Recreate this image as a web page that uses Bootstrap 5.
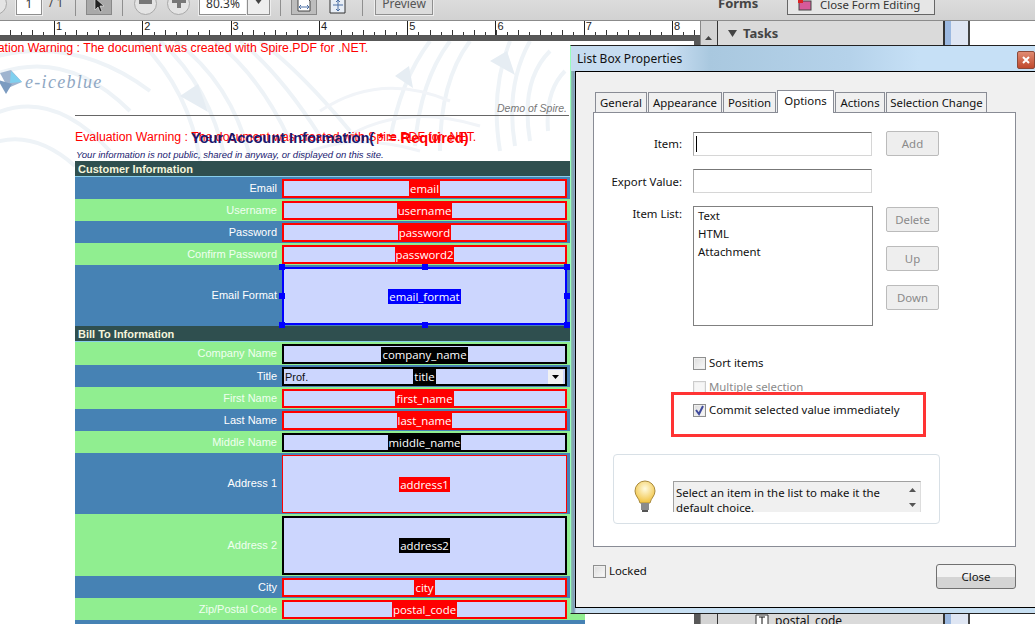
<!DOCTYPE html>
<html lang="en">
<head>
<meta charset="utf-8">
<title>List Box Properties</title>
<link href="https://cdn.jsdelivr.net/npm/bootstrap@5.3.0/dist/css/bootstrap.min.css" rel="stylesheet">
<style>
html,body{margin:0;height:624px;overflow:hidden;background:#fff}
body{position:relative;width:1035px;font-family:"Liberation Sans",Arial,sans-serif;color:#000}
.ui{font-family:"Noto Sans","Open Sans",sans-serif;font-size:11.4px}
.tbar{height:21px;background:linear-gradient(#dcdcdc,#d2d2d2);border-bottom:1px solid #8b8b8b;overflow:hidden;position:relative}
.tbar-in{height:20px;margin-top:-5px;align-items:flex-start}
.tsep{width:1px;height:16px;background:#8f8f8f;margin-top:5px;flex:none}
.tbox{height:20px;background:#fff;border:1px solid #8f8f8f;box-shadow:0 0 0 1px #eee;font-size:12px;color:#333;text-align:center;line-height:16px;flex:none}
.tround{width:23px;height:23px;border-radius:50%;background:#e4e4e4;border:1px solid #a8a8a8;margin-top:-3px;flex:none;display:flex;align-items:center;justify-content:center}
.tbtn{height:20px;border:1px solid #888;background:#c8c8c8;flex:none;display:flex;align-items:center;justify-content:center}
.toolmain{height:603px}
.docside{width:700px;flex:none;position:relative;overflow:hidden;background:#585858}
.rul{height:15px;background-color:#fff;position:relative;border-bottom:1px solid #555;
 background-image:repeating-linear-gradient(90deg,#333 0 1px,transparent 1px 22.08px),repeating-linear-gradient(90deg,#333 0 1px,transparent 1px 11.04px);
 background-size:100% 5px,100% 3px;background-position:10px bottom,10px bottom;background-repeat:no-repeat;overflow:hidden}
.rul-in{padding-left:54px;height:15px}
.rcell{width:88.3px;flex:none;border-left:1px solid #222;font-size:11px;line-height:11px;padding-left:1px;color:#222}
.darkstrip{height:5px;background:#585858}
.pagewrap{position:relative;height:583px;width:694px;background:#fff;overflow:hidden}
.palm{position:absolute;left:0;top:0;width:694px;height:130px}
.pg{position:relative}
.warn{color:#f00;font-size:12.3px;line-height:15px;white-space:nowrap}
.warn1{margin-left:-33px;line-height:14px}
.logo-row{margin-top:12px;height:30px;align-items:center;padding-left:0}
.logo-txt{font-family:"Liberation Serif",serif;font-style:italic;font-size:18px;letter-spacing:1.3px;color:#8fa7c3;margin-left:3px}
.demo{width:494px;margin-left:75px;text-align:right;color:#777;font-style:italic;font-size:10.5px;line-height:13px;border-bottom:1px solid #666;height:19px;padding-top:5px;padding-right:2px}
.warnline{margin-left:75px;margin-top:14px;position:relative;width:494px;height:15px}
.acct{position:absolute;left:116px;top:0;font-weight:700;font-size:14.6px;line-height:16px;color:#191970;white-space:nowrap}
.acct b{color:#f00}
.info{margin-left:76px;margin-top:4px;color:#191970;font-style:italic;font-size:9.5px;line-height:12px;white-space:nowrap}
.ftable{margin-left:75px;width:510px}
.fhead{background:#2f4f4f;color:#f5f5dc;font-weight:700;font-size:11px;height:16px;line-height:15px;padding:1px 0 0 3px;border-bottom:1px solid #87ceeb}
.frow{display:flex;align-items:stretch}
.h22{height:22px}.h23{height:23px}.h61{height:61px}.h62{height:62px}
.bl{background:#4682b4}.gr{background:#90ee90}
.lbl{width:207px;flex:none;text-align:right;padding-right:5px;font-size:11px;color:#fff;align-self:center}
.gr .lbl{color:#f0fff0}
.fld{width:285px;flex:none;margin:2px 0 1px;background:#ccd6fe;border:2px solid #f00;display:flex;align-items:center;justify-content:center;position:relative}
.fld.thin{border-width:1px}
.fld.blk{border-color:#000}
.fld.sel{border-color:#00f}
.nm{font-family:"Open Sans","Noto Sans",sans-serif;font-size:11.4px;line-height:15px;color:#fff;background:#f00;padding:0 1px;white-space:nowrap}
.blk .nm{background:#000}.sel .nm{background:#00f}
.hd{position:absolute;width:6px;height:6px;background:#00f}
.prof{position:absolute;left:1px;top:1px;font-family:"Liberation Sans",sans-serif;font-size:11px;color:#111;line-height:15px}
.ddn{position:absolute;right:2px;top:1px;width:15px;height:14px;background:#f2f2f2;display:flex;align-items:center;justify-content:center}
.vscroll{width:17px;flex:none;background:#d4d4d4;border-left:1px solid #888;position:relative}
.sidep{width:228px;flex:none;background:#dadada;border-right:2px solid #333;border-left:1px solid #333;position:relative}
.sidep-top{height:25px;padding:4px 0 0 10px;font-weight:700;color:#444;font-size:13px;line-height:16px}
.tree{position:absolute;left:37px;top:591px;display:flex;align-items:center;gap:6px;font-size:12px;color:#111}
.sidestrip{width:25px;flex:none;background:linear-gradient(90deg,#9bb8e0 0 6px,#dfe6f3 6px);border-right:2px solid #444}
.fright{flex:1;background:#fff}
.fright i{display:block;height:27px;border-bottom:1px solid #ccc}
.tform{position:absolute;left:718px;top:-5px;font-weight:700;font-size:13px;color:#444;line-height:16px}
.tclose{position:absolute;left:787px;top:-6px;width:148px;height:21px;background:#e6e6e6;border:1px solid #666;font-size:11.4px;color:#333;display:flex;align-items:center;gap:7px;padding-left:9px;line-height:14px}
.dlg{position:absolute;left:570px;top:45px;width:465px;height:569px;background:linear-gradient(90deg,#8dc2ad,#7d98b8 3px,#c7dff2 5px);border-top:1px solid #222;border-bottom:1px solid #222;border-left:1px solid #9fb;overflow:hidden}
.dlg-title{height:25px;padding-left:6px;line-height:25px;background:linear-gradient(90deg,#c6dcf0 22%,#a9c8df 30%,#b5d2ea 60%,#c6e0f6 75%);color:#111;font-size:12px;position:relative}
.dclose{position:absolute;right:0;top:5px;width:18px;height:18px;background:linear-gradient(#e08b72,#c0492d);border:1px solid #8b4a3a;color:#fff;display:flex;align-items:center;justify-content:center;border-radius:2px}
.dbody{margin-left:4px;width:461px;height:537px;background:#f0f0f0;border:1px solid #000;border-right:0;padding:18px 0 0 17px;position:relative}
.tabsr{height:22px;align-items:flex-end;padding-left:2px;position:relative;z-index:1;gap:1px}
.tabb{height:20px;background:#f0f0f0;border:1px solid #898c95;border-bottom:0;line-height:19px;text-align:center;color:#111;flex:none;white-space:nowrap}
.tabb.on{background:#fff;margin-bottom:-1px;height:23px;line-height:20px}
.tpanel{width:423px;height:435px;background:#fff;border:1px solid #898c95;padding-top:18px;box-sizing:border-box}
.prow{display:flex;align-items:center}
.plbl{width:88px;flex:none;text-align:right;color:#111;margin-right:11px;padding-top:1px}
.plbl.lst{padding-top:0;margin-top:-1px}
.ptxt{width:179px;height:24px;flex:none;border:1px solid #d6d6d6;border-top-color:#777;border-left-color:#aaa;background:#fff;position:relative}
.caret-b{position:absolute;left:2px;top:3px;width:1px;height:16px;background:#000}
.pbtn{width:53px;height:25px;flex:none;border:1px solid #bbb;background:#eee;border-radius:2px;color:#8a8a8a;text-align:center;line-height:23px;padding:0}
.plist{width:180px;height:120px;border:1px solid #808080;padding:0 4px;line-height:18px;color:#111;flex:none}
.ck{width:13px;height:13px;border:1px solid #8e8f8f;background:linear-gradient(135deg,#dcdcdc,#fafafa);box-shadow:inset 0 0 0 1px #eee;flex:none;display:flex;align-items:center;justify-content:center;margin-right:3px}
.ckr{display:flex;align-items:center;color:#111;height:18px;margin-left:99px}
.ckr.dis{color:#8a8a8a}
.ckr.dis .ck{border-color:#ccc;background:#f6f6f6}
.redann{position:absolute;left:95px;top:320px;width:255px;height:45px;border:3px solid #f33}
.tipbox{margin-left:19px;width:327px;height:70px;border:1px solid #d8e0e6;border-radius:4px;position:relative;display:flex;align-items:flex-end;padding:0 18px 11px 20px;gap:17px}
.tiptxt{width:248px;height:31px;background:#f0f0f0;border:1px solid #a0a0a0;border-bottom:0;border-right-color:#ddd;line-height:15px;padding:3px 20px 0 2px;overflow:hidden;position:relative;color:#111}
.tipsc{position:absolute;right:0;top:0;bottom:0;width:16px;background:#f0f0f0;display:flex;flex-direction:column;align-items:center;justify-content:space-around}
.dfoot{width:423px;margin-top:15px;height:27px;align-items:flex-start;justify-content:space-between}
.cbtn{width:80px;height:25px;margin-top:2px;border:1px solid #707070;border-radius:3px;background:linear-gradient(#f2f2f2 50%,#d4d4d4 50%);text-align:center;color:#111;line-height:23px;padding:0}
</style>
</head>
<body>
<div class="tbar ui">
  <div class="d-flex tbar-in">
    <div class="tround" style="margin-left:-16px;margin-right:9px"></div>
    <div class="tbox" style="width:26px;margin-right:7px">1</div>
    <div style="width:20px;flex:none;margin-right:6px;color:#444;line-height:16px;font-size:12px">/ 1</div>
    <div class="tsep" style="margin-right:10px"></div>
    <div class="tbtn" style="width:26px;margin-right:10px;background:#a9a9a9"><svg width="12" height="16" viewBox="0 0 12 16"><path d="M2 1v12l3-3 2 5 2-1-2-5h4z" fill="#222" stroke="#eee" stroke-width=".6"/></svg></div>
    <div class="tsep" style="margin-right:11px"></div>
    <div class="tround" style="margin-right:10px"><span style="display:block;width:13px;height:5px;background:#777;margin-top:-5px"></span></div>
    <div class="tround" style="margin-right:9px"><svg width="14" height="14" style="margin-top:-5px"><path d="M5 0h4v5h5v4H9v5H5V9H0V5h5z" fill="#777"/></svg></div>
    <div class="tbox" style="width:48px">80.3%</div>
    <div class="tbox" style="width:23px;background:#eee;margin-right:10px"><svg width="9" height="6" style="vertical-align:4px"><path d="M0 0h9L4.500 6z" fill="#444"/></svg></div>
    <div class="tsep" style="margin-right:10px"></div>
    <div class="tbtn" style="width:26px;margin-right:12px;background:#bdbdbd"><svg width="18" height="16"><path d="M3 1h9l3 3v10H3z" fill="#fff" stroke="#444"/><path d="M4 10h10M4 10l2-2M4 10l2 2M14 10l-2-2M14 10l-2 2" stroke="#4a6fa5"/></svg></div>
    <div style="width:18px;flex:none;margin-right:15px;margin-top:1px"><svg width="18" height="18"><path d="M1 1h15v15H1z" fill="#e8eef6" stroke="#333"/><path d="M9 3v11M4 8h10M9 3L7 5M9 3l2 2M9 14l-2-2M9 14l2-2" stroke="#4a6fa5"/></svg></div>
    <div class="tsep" style="margin-right:12px"></div>
    <div class="tbox" style="width:58px;background:#dcdcdc;color:#555">Preview</div>
  </div>
  <div class="tform">Forms</div>
  <div class="tclose"><svg width="16" height="14"><rect x="2" y="3" width="12" height="9" fill="#d65a9a" stroke="#444"/><rect x="1" y="0" width="5" height="5" fill="#d22"/></svg><span>Close Form Editing</span></div>
</div>
<div class="d-flex toolmain">
  <div class="docside">
    <div class="rul"><div class="d-flex rul-in"><div class="rcell">1</div><div class="rcell">2</div><div class="rcell">3</div><div class="rcell">4</div><div class="rcell">5</div><div class="rcell">6</div><div class="rcell">7</div><div class="rcell">8</div></div></div>
    <div class="darkstrip"></div>
    <div class="pagewrap">
      <svg class="palm" viewBox="0 0 694 130" fill="none" stroke="#eef3f7" stroke-width="4">
        <path d="M-20 40Q60 0 130 70M-10 75Q50 45 110 110M-15 105Q30 85 75 125M-20 20Q70 -10 150 50M140 0Q190 50 200 120M160 0Q210 45 225 118M175 0Q230 40 250 115M215 0Q260 35 290 100M240 0Q280 32 320 95M260 0Q300 30 350 90M430 0Q400 40 390 100M450 0Q420 40 415 105M470 0Q440 40 440 110M510 0Q490 50 500 110M530 0Q505 45 515 105M550 10Q520 40 530 100M565 30Q545 50 548 90"/>
        <path d="M320 70Q380 30 450 60M340 100Q400 60 480 85M300 115Q350 90 420 110" stroke="#f1f4f8" stroke-width="3"/>
        <path d="M490 20l25 14 -8 -24zM180 55l28 16 -10 -28zM395 35l18 12 -4 -22z" fill="#e6edf3" stroke="none"/>
      </svg>
      <div class="pg">
        <div class="warn warn1">Evaluation Warning : The document was created with Spire.PDF for .NET.</div>
        <div class="d-flex logo-row">
          <svg width="22" height="28" viewBox="0 0 22 28" class="flex-none"><path d="M0 5l11-3 11 12-14 6z" fill="#9fb4cf"/><path d="M11 3l11 11-12 1z" fill="#7fd0ef"/><path d="M-2 12l8 14 6-10z" fill="#7c9bc0"/></svg>
          <span class="logo-txt">e-iceblue</span>
        </div>
        <div class="demo">Demo of Spire.</div>
        <div class="warnline">
          <div class="warn">Evaluation Warning : The document was created with Spire.PDF for .NET.</div>
          <div class="acct">Your Account Information( <b>* = Required)</b></div>
        </div>
        <div class="info">Your information is not public, shared in anyway, or displayed on this site.</div>
        <div class="ftable">
          <div class="fhead">Customer Information</div>
          <div class="frow h22 bl"><div class="lbl">Email</div><div class="fld"><span class="nm">email</span></div></div>
          <div class="frow h22 gr"><div class="lbl">Username</div><div class="fld"><span class="nm">username</span></div></div>
          <div class="frow h22 bl"><div class="lbl">Password</div><div class="fld"><span class="nm">password</span></div></div>
          <div class="frow h22 gr"><div class="lbl">Confirm Password</div><div class="fld"><span class="nm">password2</span></div></div>
          <div class="frow h61 bl"><div class="lbl">Email Format</div><div class="fld sel"><span class="nm">email_format</span>
            <i class="hd" style="left:-5px;top:-5px"></i><i class="hd" style="left:138px;top:-5px"></i><i class="hd" style="right:-5px;top:-5px"></i>
            <i class="hd" style="left:-5px;top:24px"></i><i class="hd" style="right:-5px;top:24px"></i>
            <i class="hd" style="left:-5px;bottom:-5px"></i><i class="hd" style="left:138px;bottom:-5px"></i><i class="hd" style="right:-5px;bottom:-5px"></i></div></div>
          <div class="fhead">Bill To Information</div>
          <div class="frow h23 gr"><div class="lbl">Company Name</div><div class="fld blk"><span class="nm">company_name</span></div></div>
          <div class="frow h22 bl"><div class="lbl">Title</div><div class="fld blk"><span class="prof">Prof.</span><span class="nm">title</span><span class="ddn"><svg width="7" height="4"><path d="M0 0h7L3.500 4z" fill="#000"/></svg></span></div></div>
          <div class="frow h22 gr"><div class="lbl">First Name</div><div class="fld"><span class="nm">first_name</span></div></div>
          <div class="frow h22 bl"><div class="lbl">Last Name</div><div class="fld"><span class="nm">last_name</span></div></div>
          <div class="frow h22 gr"><div class="lbl">Middle Name</div><div class="fld blk"><span class="nm">middle_name</span></div></div>
          <div class="frow h61 bl"><div class="lbl">Address 1</div><div class="fld thin"><span class="nm">address1</span></div></div>
          <div class="frow h62 gr"><div class="lbl">Address 2</div><div class="fld blk"><span class="nm">address2</span></div></div>
          <div class="frow h22 bl"><div class="lbl">City</div><div class="fld"><span class="nm">city</span></div></div>
          <div class="frow h22 gr"><div class="lbl">Zip/Postal Code</div><div class="fld"><span class="nm">postal_code</span></div></div>
          <div class="frow h22 bl"></div>
        </div>
      </div>
    </div>
  </div>
  <div class="vscroll"><svg width="7" height="4" style="position:absolute;left:4px;top:15px"><path d="M0 4h7L3.500 0z" fill="#444"/></svg></div>
  <div class="sidep ui">
    <div class="sidep-top"><svg width="9" height="7" style="margin-right:6px;vertical-align:1px"><path d="M0 0h9L4.500 7z" fill="#444"/></svg>Tasks</div>
    <div class="tree"><svg width="14" height="14"><path d="M1 13V1h12v12" fill="#fff" stroke="#333"/><path d="M4 3h6M7 3v8M5 11h4" stroke="#111"/></svg><span>postal_code</span></div>
  </div>
  <div class="sidestrip"></div>
  <div class="fright"><i></i></div>
</div>

<div class="dlg ui">
  <div class="dlg-title">List Box Properties<div class="dclose"><svg width="8" height="8"><path d="M1 1l6 6M7 1L1 7" stroke="#fff" stroke-width="2"/></svg></div></div>
  <div class="dbody">
    <div class="d-flex tabsr">
      <div class="tabb" style="width:52px">General</div>
      <div class="tabb" style="width:74px">Appearance</div>
      <div class="tabb" style="width:53px">Position</div>
      <div class="tabb on" style="width:57px">Options</div>
      <div class="tabb" style="width:50px">Actions</div>
      <div class="tabb" style="width:101px">Selection Change</div>
    </div>
    <div class="tpanel">
      <div class="prow"><div class="plbl">Item:</div><div class="ptxt"><i class="caret-b"></i></div><button type="button" class="pbtn" style="margin-left:14px">Add</button></div>
      <div class="prow" style="margin-top:13px"><div class="plbl">Export Value:</div><div class="ptxt"></div></div>
      <div class="prow align-items-start" style="margin-top:13px">
        <div class="plbl lst">Item List:</div>
        <div class="plist"><div>Text</div><div>HTML</div><div>Attachment</div></div>
        <div class="d-flex flex-column" style="margin-left:13px;gap:14px;padding-top:1px">
          <button type="button" class="pbtn">Delete</button><button type="button" class="pbtn">Up</button><button type="button" class="pbtn">Down</button>
        </div>
      </div>
      <div class="ckr" style="margin-top:28px"><span class="ck"></span>Sort items</div>
      <div class="ckr dis" style="margin-top:6px"><span class="ck"></span>Multiple selection</div>
      <div class="ckr" style="margin-top:5px"><span class="ck"><svg width="11" height="11"><path d="M2 5l3 4 4-8" fill="none" stroke="#3f4a9c" stroke-width="2"/></svg></span>Commit selected value immediately</div>
      <div class="tipbox" style="margin-top:35px">
        <svg width="22" height="32" viewBox="0 0 22 32" class="flex-none"><defs><radialGradient id="bulbg" cx=".5" cy=".35" r=".6"><stop offset="0" stop-color="#fffbe0"/><stop offset="1" stop-color="#f2c64a"/></radialGradient></defs><path d="M11 1a10 10 0 0 0-10 10c0 5 4 7 5 12h10c1-5 5-7 5-12A10 10 0 0 0 11 1z" fill="url(#bulbg)" stroke="#a98a3c"/><rect x="7" y="23" width="8" height="7" fill="#8b8b8b"/><rect x="8" y="30" width="6" height="2" fill="#555"/></svg>
        <div class="tiptxt">Select an item in the list to make it the default choice.
          <div class="tipsc"><svg width="7" height="4"><path d="M0 4h7L3.500 0z" fill="#555"/></svg><svg width="7" height="4"><path d="M0 0h7L3.500 4z" fill="#555"/></svg></div>
        </div>
      </div>
    </div>
    <div class="d-flex dfoot">
      <div class="d-flex align-items-center" style="color:#111;height:18px"><span class="ck"></span>Locked</div>
      <button type="button" class="cbtn">Close</button>
    </div>
    <div class="redann"></div>
  </div>
</div>
<script src="https://cdn.jsdelivr.net/npm/bootstrap@5.3.0/dist/js/bootstrap.bundle.min.js"></script>
</body>
</html>
